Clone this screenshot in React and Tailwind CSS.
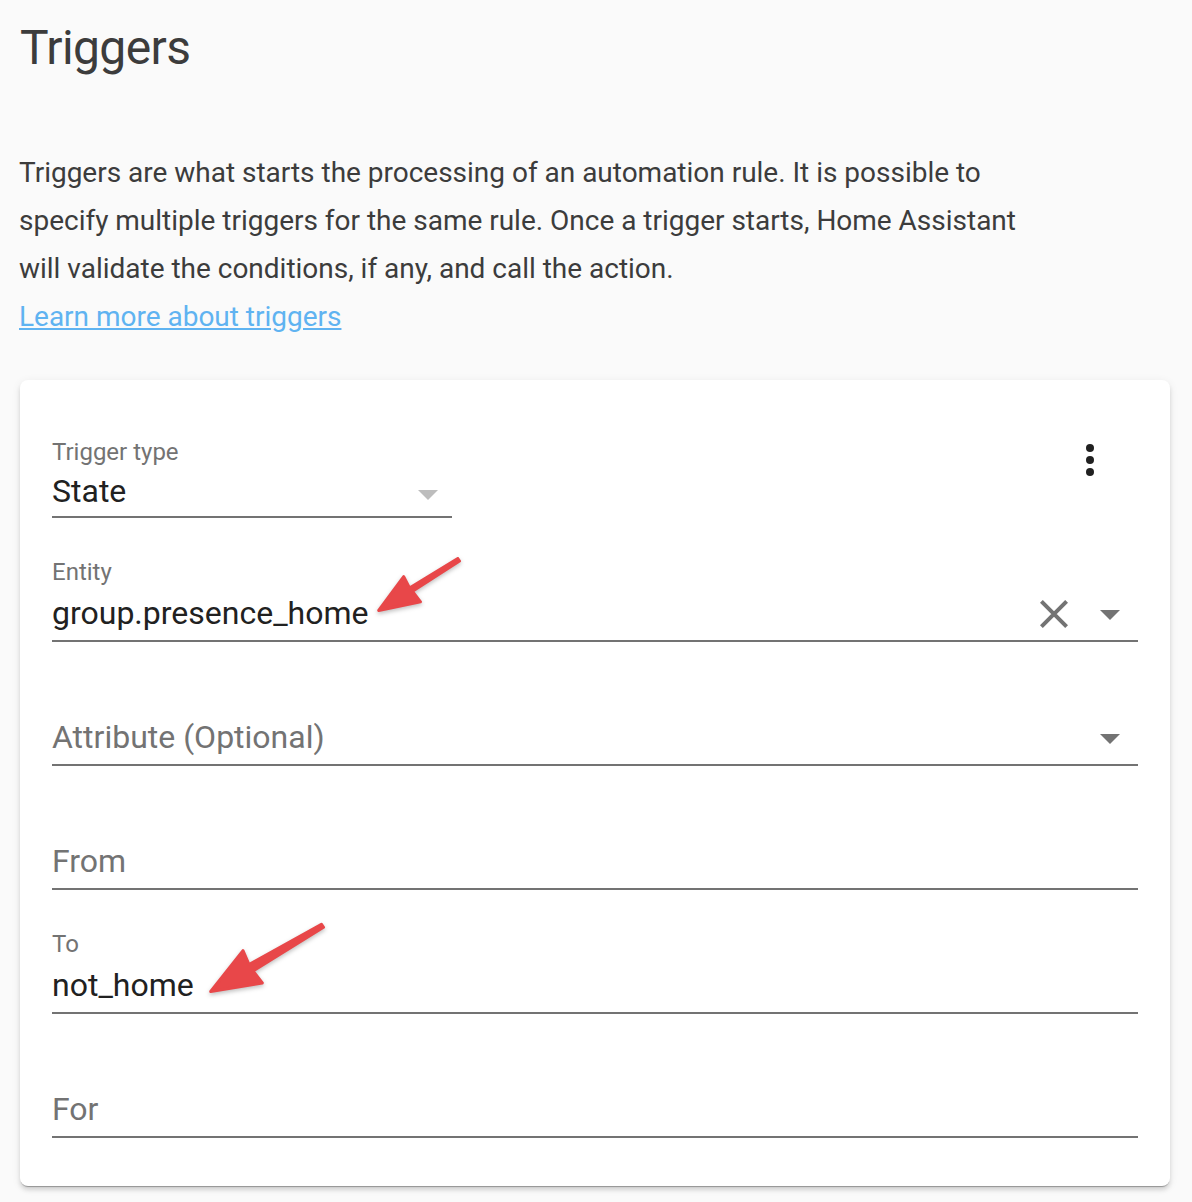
import React from "react";

function Caret({ className }) {
  return (
    <svg viewBox="0 0 20 10" className={`h-[10px] w-5 ${className}`} fill="currentColor">
      <path d="M0 0h20L10 10z" />
    </svg>
  );
}

function Field({ label, value, children }) {
  return (
    <div className="relative flex h-[124px] flex-col justify-end border-b-2 border-[#737373] pb-[3px]">
      {value && <div className="mb-px text-[24px] leading-8 text-[#737373]">{label}</div>}
      <div className="flex h-12 items-center justify-between pr-[18px]">
        <span className={value ? "text-[32px] leading-12 text-[#212121]" : "text-[32px] leading-12 text-[#737373]"}>
          {value || label}
        </span>
        <span className="flex items-center gap-8 text-[#737373]">{children}</span>
      </div>
    </div>
  );
}

function Arrow({ className, path, viewBox }) {
  return (
    <svg
      viewBox={viewBox}
      className={`absolute overflow-visible drop-shadow-[0_2px_2px_rgba(0,0,0,0.25)] ${className}`}
      fill="#e84749"
      stroke="#e84749"
      strokeWidth="3"
      strokeLinejoin="round"
    >
      <path d={path} />
    </svg>
  );
}

export default function App() {
  return (
    <main className="h-[1202px] w-[1192px] overflow-hidden bg-[#fafafa] px-5 pt-5 font-['Roboto',sans-serif] text-[#3c3c3c]">
      <h1 className="text-[48px] leading-14 tracking-[-0.6px]">Triggers</h1>
      <p className="mt-[73px] -ml-px text-[28px] leading-12 tracking-[-0.012px] whitespace-nowrap">
        Triggers are what starts the processing of an automation rule. It is possible to<br />
        specify multiple triggers for the same rule. Once a trigger starts, Home Assistant<br />
        will validate the conditions, if any, and call the action.<br />
        <a className="text-[#5fb3f1] underline">Learn more about triggers</a>
      </p>
      <section className="mt-[39px] h-[806px] w-[1150px] rounded-lg bg-white px-8 pt-14 shadow-[0_4px_4px_rgba(0,0,0,0.12),0_2px_10px_rgba(0,0,0,0.08),0_2px_1px_-1px_rgba(0,0,0,0.3)]">
        <div className="flex justify-between pr-[43px]">
          <div className="h-[82px] w-[400px] border-b-2 border-[#737373]">
            <div className="text-[24px] leading-8 text-[#737373]">Trigger type</div>
            <div className="-mt-px flex h-12 items-center justify-between pr-[14px] text-[32px] text-[#212121]">
              State<Caret className="mt-[7px] text-[#bdbdbd]" />
            </div>
          </div>
          <svg viewBox="0 0 10 34" className="mt-[7px] h-[34px] w-[10px]" fill="#212121">
            <circle cx="5" cy="5" r="4" /><circle cx="5" cy="17" r="4" /><circle cx="5" cy="29" r="4" />
          </svg>
        </div>
        <Field label="Entity" value="group.presence_home">
          <svg viewBox="0 0 28 28" className="mt-[2px] size-7" fill="none" stroke="currentColor" strokeWidth="4"><path d="M1.4 1.4l25.2 25.2M26.6 1.4L1.4 26.6" /></svg>
          <Caret className="mt-1" />
          <Arrow className="top-[37px] left-[324px] h-[60px] w-[86px]" viewBox="376 555 86 60" path="M378.7 610.5L403.7 576.7L409.5 588L457.8 558.5L459.5 561L412.5 591.3L420.5 601.8Z" />
        </Field>
        <Field label="Attribute (Optional)"><Caret className="mt-1" /></Field>
        <Field label="From" />
        <Field label="To" value="not_home">
          <Arrow className="top-[32px] left-[156px] h-[74px] w-[118px]" viewBox="208 922 118 74" path="M210.7 991.5L243 950.7L249 964.5L321.5 924.3L323.5 927.3L253 971L262.3 983Z" />
        </Field>
        <Field label="For" />
      </section>
    </main>
  );
}
